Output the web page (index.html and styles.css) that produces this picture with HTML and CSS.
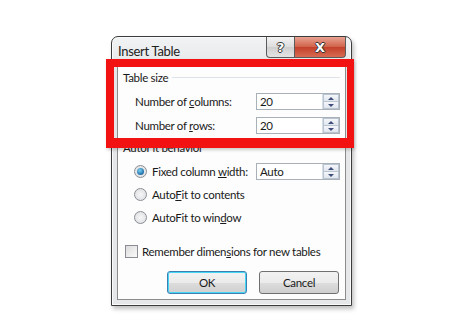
FILE: index.html
```html
<!DOCTYPE html>
<html>
<head>
<meta charset="utf-8">
<link rel="stylesheet" href="styles.css">
</head>
<body>
<div class="stage">
  <div class="window">
    <div class="titlebar">
      <span class="title">Insert Table</span>
      <div class="caption-btns">
        <div class="cbtn help"><span>?</span></div>
        <div class="cbtn close"><span>X</span></div>
      </div>
    </div>
    <div class="client">
      <div class="group-head g1"><span>Table size</span></div>
      <div class="row r-cols">
        <span class="lbl">Number of <u>c</u>olumns:</span>
        <div class="spin"><span class="val">20</span><div class="arrows"><i class="up"></i><i class="down"></i></div></div>
      </div>
      <div class="row r-rows">
        <span class="lbl">Number of <u>r</u>ows:</span>
        <div class="spin"><span class="val">20</span><div class="arrows"><i class="up"></i><i class="down"></i></div></div>
      </div>
      <div class="group-head g2"><span>AutoFit behavior</span></div>
      <div class="row r-fixed">
        <span class="radio on"></span>
        <span class="opt">Fixed column <u>w</u>idth:</span>
        <div class="spin"><span class="val">Auto</span><div class="arrows"><i class="up"></i><i class="down"></i></div></div>
      </div>
      <div class="row r-opt">
        <span class="radio"></span>
        <span class="opt">Auto<u>F</u>it to contents</span>
      </div>
      <div class="row r-opt">
        <span class="radio"></span>
        <span class="opt">AutoFit to win<u>d</u>ow</span>
      </div>
      <div class="row r-check">
        <span class="check"></span>
        <span class="opt">Remember dimen<u>s</u>ions for new tables</span>
      </div>
      <div class="buttons">
        <div class="btn ok">OK</div>
        <div class="btn">Cancel</div>
      </div>
    </div>
  </div>
  <div class="highlight"></div>
</div>
</body>
</html>
```
FILE: styles.css
```css
* { box-sizing: border-box; }
html, body { margin: 0; padding: 0; background: #fff; }
body {
  font-family: Lato, "Open Sans", sans-serif;
  font-size: 11.5px;
  letter-spacing: -0.3px;
  color: #1a1a1a;
  width: 460px;
  height: 320px;
  overflow: hidden;
}
.stage {
  position: relative;
  padding: 36px 0 0 111px;
}
.window {
  width: 241px;
  height: 270px;
  border: 1px solid #3c3c3c;
  border-radius: 7px 7px 0 0;
  background: linear-gradient(#f2f3f4, #e4e6e8 30px, #e6e7e9);
  box-shadow: 2px 3px 4px rgba(0,0,0,0.25), inset 0 0 0 1px #fafafa;
  display: flex;
  flex-direction: column;
  padding: 0 5px 5px 5px;
}
.titlebar {
  height: 24px;
  display: flex;
  justify-content: space-between;
  align-items: flex-start;
}
.title {
  font-size: 13px;
  color: #222;
  margin-top: 6px;
  margin-left: 1px;
}
.caption-btns {
  display: flex;
}
.cbtn {
  height: 21px;
  display: flex;
  align-items: center;
  justify-content: center;
  border: 1px solid #5b5b5b;
  border-top: none;
  font-family: "DejaVu Sans", sans-serif;
  font-weight: bold;
  font-size: 13px;
  letter-spacing: 0;
  color: #fff;
}
.cbtn span {
  text-shadow: -1px 0 #333, 1px 0 #333, 0 -1px #333, 0 1px #333;
}
.help {
  width: 29px;
  border-radius: 0 0 0 4px;
  background: linear-gradient(#f4f4f4, #dcdcdc 50%, #cfcfcf 51%, #e4e4e4);
}
.close {
  width: 51px;
  border-left: none;
  border-radius: 0 0 4px 0;
  background: linear-gradient(#e8a392, #d0614a 50%, #c3402a 51%, #d86a52);
}
.client {
  flex: 1;
  background: #fdfdfd;
  border: 1px solid #8c8c8c;
  padding: 7px 5px 0 5px;
  display: flex;
  flex-direction: column;
}
.group-head {
  height: 16px;
  display: flex;
  align-items: center;
}
.group-head span { margin-right: 4px; }
.group-head::after {
  content: "";
  flex: 1;
  height: 1px;
  background: #dde3e8;
}
.row {
  display: flex;
  align-items: center;
  height: 17px;
}
.lbl { margin-left: 12px; flex: 1; }
.r-cols { margin-top: 8px; }
.r-rows { margin-top: 7px; }
.g2 { margin-top: 5px; }
.r-fixed { margin-top: 8px; }
.r-opt { margin-top: 6px; }
.r-check { margin-top: 17px; }
.spin {
  width: 84px;
  height: 17px;
  border: 1px solid #a9b0b8;
  background: #fff;
  display: flex;
  justify-content: space-between;
}
.val { padding-left: 3px; line-height: 15px; }
.arrows {
  width: 17px;
  display: flex;
  flex-direction: column;
  border-left: 1px solid #d8dde3;
}
.arrows i {
  flex: 1;
  display: flex;
  align-items: center;
  justify-content: center;
  background: linear-gradient(#f4f6f9, #e1e6ee);
  border: 1px solid #b9c4d2;
}
.arrows i + i { border-top: none; }
.arrows i::before {
  content: "";
  border-left: 3px solid transparent;
  border-right: 3px solid transparent;
}
.up::before { border-bottom: 3px solid #3f4f7a; }
.down::before { border-top: 3px solid #3f4f7a; }
.radio {
  width: 13px;
  height: 13px;
  border-radius: 50%;
  border: 1px solid #8a8e94;
  background: radial-gradient(#f6f6f6, #dadcdf);
  margin-left: 11px;
  margin-right: 5px;
  display: flex;
  align-items: center;
  justify-content: center;
}
.radio.on::after {
  content: "";
  width: 7px;
  height: 7px;
  border-radius: 50%;
  background: radial-gradient(circle at 40% 35%, #7ed0f3, #1e6fa8 70%, #15507a);
}
.r-fixed .opt { flex: 1; }
.check {
  width: 13px;
  height: 13px;
  border: 1px solid #8a8e94;
  background: linear-gradient(135deg, #dcdcdc, #fafafa);
  margin-left: 2px;
  margin-right: 4px;
}
.buttons {
  display: flex;
  justify-content: flex-end;
  gap: 12px;
  margin-top: 11px;
  padding-right: 1px;
}
.btn {
  width: 80px;
  height: 23px;
  border: 1px solid #707070;
  border-radius: 3px;
  background: linear-gradient(#f2f2f2, #ebebeb 50%, #dddddd 51%, #cfcfcf);
  display: flex;
  align-items: center;
  justify-content: center;
}
.btn.ok {
  border-color: #3c7fb1;
  box-shadow: inset 0 0 0 1px #48d6f7;
}
.highlight {
  position: absolute;
  left: 106px;
  top: 59px;
  width: 248px;
  height: 89px;
  border: 8px solid #f21212;
  border-bottom-width: 10px;
  border-right-width: 7px;
  box-shadow: 1px 2px 3px rgba(0,0,0,0.2);
}
```
